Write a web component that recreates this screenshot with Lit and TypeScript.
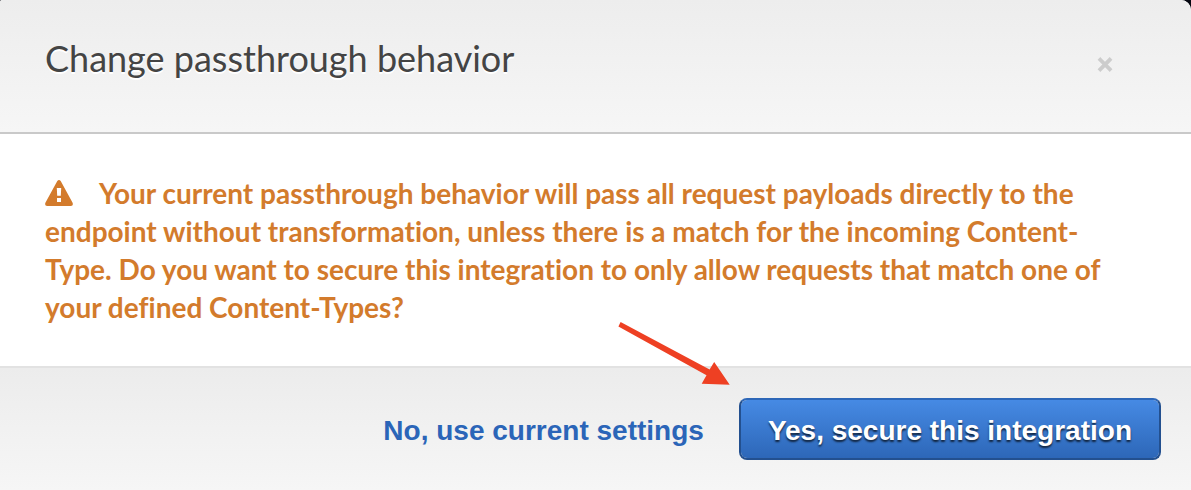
import { LitElement, html, css } from "lit";
import { customElement } from "lit/decorators.js";

@customElement("app-root")
export class AppRoot extends LitElement {
  static styles = css`
    :host {
      display: block;
      min-height: 100vh;
      background: #fff;
    }
    .backdrop {
      background: #04060f;
    }
    .dialog {
      display: flex;
      flex-direction: column;
      background: #fff;
      border-radius: 2px 10px 0 0;
      overflow: hidden;
      font-family: Lato, sans-serif;
    }
    .header {
      display: flex;
      align-items: flex-start;
      justify-content: space-between;
      padding: 34px 78px 50px 45px;
      border-bottom: 2px solid #c9c9c9;
      background: linear-gradient(#ededed, #f6f6f6);
    }
    .title {
      margin: 0;
      font-size: 36px;
      line-height: 48px;
      font-weight: 400;
      color: #444;
      text-shadow: 0 2px 0 #fff;
    }
    .close {
      display: flex;
      margin: 22px 0 0;
      padding: 0;
      border: 0;
      background: none;
      color: #ccc;
      cursor: pointer;
    }
    .body {
      padding: 40px 78px 40px 45px;
    }
    .message {
      margin: 0;
      font-size: 28px;
      line-height: 38px;
      font-weight: 700;
      font-variant-ligatures: no-common-ligatures;
      color: #d37b2c;
    }
    .warning {
      width: 28px;
      height: 26px;
      margin-right: 26px;
      vertical-align: -2px;
    }
    .footer {
      display: flex;
      align-items: center;
      justify-content: flex-end;
      gap: 35px;
      padding: 30px;
      border-top: 2px solid #e2e2e2;
      background: linear-gradient(#ececec, #f6f6f6);
    }
    .link,
    .primary {
      font-family: "Liberation Sans", Arial, sans-serif;
      font-size: 28px;
      line-height: 38px;
      font-weight: 700;
      cursor: pointer;
    }
    .link {
      padding: 4px 0 0;
      border: 0;
      background: none;
      color: #2b65b8;
    }
    .target {
      position: relative;
      display: flex;
    }
    .primary {
      padding: 12px 27px 8px;
      border: 2px solid #23508f;
      border-top-color: #2d67b8;
      border-radius: 8px;
      background: linear-gradient(#468ae4, #2d67b8) padding-box;
      color: #fff;
      text-shadow: 0 2px 2px rgba(0, 0, 0, 0.7);
    }
    .arrow {
      position: absolute;
      right: 100%;
      bottom: 100%;
      margin: 0 9px 12px 0;
      pointer-events: none;
    }
  `;

  render() {
    return html`
      <div class="backdrop">
        <section class="dialog" role="dialog" aria-labelledby="title">
          <header class="header">
            <h1 class="title" id="title">Change passthrough behavior</h1>
            <button class="close" type="button" aria-label="Close">
              <svg width="16" height="17" viewBox="0 0 16 17" aria-hidden="true">
                <path
                  d="M3.3 3.8 12.7 13.2M12.7 3.8 3.3 13.2"
                  fill="none"
                  stroke="currentColor"
                  stroke-width="3.8"
                  stroke-linecap="square"
                  stroke-linejoin="round"
                />
              </svg>
            </button>
          </header>
          <div class="body">
            <p class="message"><svg class="warning" viewBox="0 0 28 26" aria-hidden="true">
                <path
                  fill="currentColor"
                  fill-rule="evenodd"
                  d="M12.3 1.1Q14-1.1 15.7 1.1L27.6 22.8Q28.6 25.7 25.9 26H2.1Q-.6 25.7.4 22.8ZM11.8 8 12.2 15.8H15.8L16.2 8ZM12 18V22H16V18Z"
                /></svg>Your current passthrough behavior will pass all request payloads directly to the endpoint without transformation, unless there is a match for the incoming Content-Type. Do you want to secure this integration to only allow requests that match one of your defined Content-Types?</p>
          </div>
          <footer class="footer">
            <button class="link" type="button">No, use current settings</button>
            <div class="target">
              <button class="primary" type="button">Yes, secure this integration</button>
              <svg class="arrow" width="112" height="64" viewBox="0 0 112 64" aria-hidden="true">
                <path
                  fill="#ee4023"
                  d="M2.6 0 91.6 47.5 96.2 40 111.7 62.8 83.7 61.8 88.5 53.3.4 4.4Z"
                />
              </svg>
            </div>
          </footer>
        </section>
      </div>
    `;
  }
}
